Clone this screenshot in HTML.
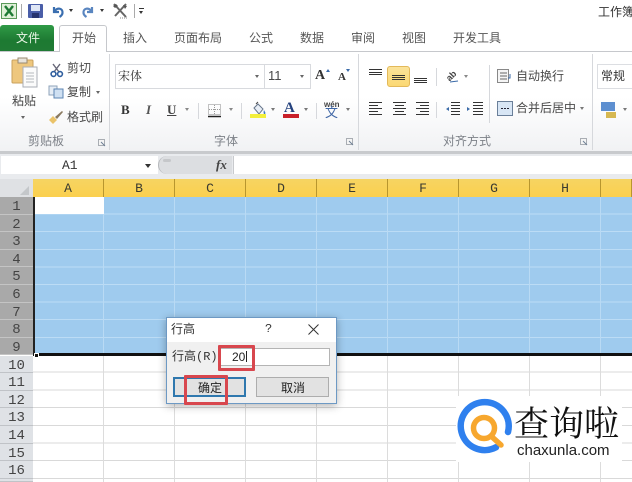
<!DOCTYPE html>
<html><head><meta charset="utf-8">
<style>
html,body{margin:0;padding:0}
body{width:632px;height:482px;overflow:hidden;position:relative;background:#fff;font-family:"Liberation Sans","Noto Sans CJK SC",sans-serif;color:#444}
#w{position:absolute;left:0;top:0;width:632px;height:482px;overflow:hidden;filter:blur(.35px)}
.a{position:absolute;white-space:nowrap}
.t{position:absolute;white-space:nowrap;font-size:12px;line-height:14px;color:#4a4a4a}
.tab{position:absolute;top:31px;font-size:12px;line-height:14px;color:#555;white-space:nowrap}
.gl{position:absolute;top:136px;font-size:11px;line-height:13px;color:#7d8188;white-space:nowrap}
.ar{position:absolute;width:0;height:0;border-left:2.5px solid transparent;border-right:2.5px solid transparent;border-top:3px solid #666}
.sep{position:absolute;width:1px;background:#d6d8dc}
.ch{position:absolute;top:179px;height:18px;font:13px/19px "Liberation Mono",monospace;color:#3a3a30;text-align:center;border-right:1px solid #b8962e;box-sizing:border-box;background:linear-gradient(#f6d462,#fbd04e)}
.rh{position:absolute;left:0;width:33px;text-align:center;font:14px/20px "Liberation Mono",monospace;color:#444;box-sizing:border-box}
.rh.s{background:#a9a9a9;height:17.6px;border-bottom:1px solid #c4c4c4}
.rh.n{background:#dfe2e6;height:17.6px;border-bottom:1px solid #c0c3c7}
svg{position:absolute;overflow:visible}
</style></head><body><div id="w">

<!-- top bar -->
<div class="a" style="left:0;top:0;width:632px;height:24px;background:#fff"></div>
<svg style="left:1px;top:3px" width="16" height="16"><rect x=".5" y=".5" width="15" height="15" fill="#dff0d8" stroke="#5a9a5a"/><path d="M4 3l8 10M12 3L4 13" stroke="#1e7a34" stroke-width="2.4"/></svg>
<div class="sep" style="left:21px;top:4px;height:14px;background:#aaa"></div>
<svg style="left:28px;top:4px" width="16" height="15"><rect x="0" y="0" width="15" height="14" rx="1" fill="#4a5ea8"/><rect x="3" y="1" width="9" height="6" fill="#dfe6f5"/><rect x="4" y="9" width="7" height="5" fill="#27346e"/></svg>
<svg style="left:51px;top:4px" width="13" height="14"><path d="M3 3v5h5M3.5 7.5C6 3 12 4 11.5 9c-.2 2-1.5 3-3 4" fill="none" stroke="#3b6fb0" stroke-width="2.2"/></svg>
<div class="ar" style="left:69px;top:9px;border-top-color:#333"></div>
<svg style="left:82px;top:4px" width="13" height="14"><path d="M10 3v5H5M9.5 7.5C7 3 1 4 1.5 9c.2 2 1.5 3 3 4" fill="none" stroke="#5a86c0" stroke-width="2.2"/></svg>
<div class="ar" style="left:100px;top:9px;border-top-color:#333"></div>
<svg style="left:112px;top:3px" width="17" height="16"><path d="M2 1l12 13M14 1L3 13" stroke="#666" stroke-width="2"/><path d="M1 3l3-2 2 2-3 2zM11 2l4 1-2 3z" fill="#555"/><path d="M8 15h8" stroke="#888" stroke-dasharray="1 1"/></svg>
<div class="sep" style="left:134px;top:4px;height:14px;background:#aaa"></div>
<div class="a" style="left:139px;top:8px;width:5px;height:1px;background:#333"></div>
<div class="ar" style="left:139px;top:11px;border-top-color:#333"></div>
<div class="t" style="left:598px;top:5px;color:#333">工作簿</div>

<!-- tabs -->
<div class="a" style="left:0;top:25px;width:54px;height:26px;background:linear-gradient(#2f9a46,#1d7a32 60%,#207a34);border-radius:3px 3px 0 0"></div>
<div class="t" style="left:16px;top:31px;color:#eaf5e6">文件</div>
<div class="a" style="left:0;top:51px;width:632px;height:1px;background:#c6c8cc"></div>
<div class="a" style="left:59px;top:25px;width:48px;height:27px;background:#fff;border:1px solid #c6c8cc;border-bottom:none;border-radius:3px 3px 0 0;box-sizing:border-box"></div>
<div class="tab" style="left:72px">开始</div>
<div class="tab" style="left:123px">插入</div>
<div class="tab" style="left:174px">页面布局</div>
<div class="tab" style="left:249px">公式</div>
<div class="tab" style="left:300px">数据</div>
<div class="tab" style="left:351px">审阅</div>
<div class="tab" style="left:402px">视图</div>
<div class="tab" style="left:453px">开发工具</div>

<!-- ribbon -->
<div class="a" style="left:0;top:52px;width:632px;height:99px;background:linear-gradient(#fff 0,#fff 45%,#f1f2f4 100%)"></div>
<div class="a" style="left:0;top:151px;width:632px;height:3px;background:#c8cacd"></div>
<div class="sep" style="left:109px;top:54px;height:96px"></div>
<div class="sep" style="left:358px;top:54px;height:96px"></div>
<div class="sep" style="left:592px;top:54px;height:96px"></div>

<!-- clipboard -->
<svg style="left:11px;top:57px" width="28" height="32"><rect x="1" y="3" width="21" height="23" rx="1" fill="#eec77e" stroke="#c9a15c"/><rect x="7" y="1" width="9" height="5" fill="#e8e4dc" stroke="#9a8a70"/><path d="M12 10h14v20H12z" fill="#fbfbfb" stroke="#a9aeb5"/><path d="M15 16h8M15 19h8M15 22h8M15 25h8" stroke="#b4b8be"/></svg>
<div class="t" style="left:12px;top:94px;color:#444">粘贴</div>
<div class="ar" style="left:21px;top:116px"></div>
<svg style="left:50px;top:63px" width="14" height="14"><path d="M3 1l6 8M10 1L4 9" stroke="#667" stroke-width="1.4"/><circle cx="3.5" cy="11" r="2.4" fill="none" stroke="#2f5e9e" stroke-width="1.6"/><circle cx="10" cy="11" r="2.4" fill="none" stroke="#2f5e9e" stroke-width="1.6"/></svg>
<div class="t" style="left:67px;top:61px">剪切</div>
<svg style="left:48px;top:85px" width="16" height="14"><rect x="1" y="1" width="8" height="9" fill="#e6edf5" stroke="#8fa3ba"/><rect x="6" y="4" width="9" height="9" fill="#cfe0f2" stroke="#5c85b3"/></svg>
<div class="t" style="left:67px;top:85px">复制</div>
<div class="ar" style="left:96px;top:91px"></div>
<svg style="left:48px;top:110px" width="16" height="15"><path d="M1 10l4-4 4 4-4 4z" fill="#eac36a"/><path d="M7 7l7-6 1 1-6 7z" fill="#8a7a60"/></svg>
<div class="t" style="left:67px;top:110px">格式刷</div>
<div class="gl" style="left:28px;top:135px;font-size:12px">剪贴板</div>
<svg style="left:98px;top:139px" width="8" height="8"><rect x=".5" y=".5" width="6" height="6" fill="#f4f4f4" stroke="#a9adb3"/><path d="M3 3l4 4" stroke="#6e7f95"/></svg>

<!-- font -->
<div class="a" style="left:115px;top:64px;width:196px;height:25px;border:1px solid #d8dade;background:#fff;box-sizing:border-box"></div>
<div class="sep" style="left:264px;top:64px;height:25px;background:#d8dade"></div>
<div class="t" style="left:118px;top:69px;color:#333;font-family:'Liberation Serif','Noto Serif CJK SC',serif">宋体</div>
<div class="ar" style="left:255px;top:75px"></div>
<div class="t" style="left:268px;top:69px;font-size:13px">11</div>
<div class="ar" style="left:300px;top:75px"></div>
<div class="a" style="left:315px;top:68px;font:bold 14px/16px 'Liberation Serif',serif;color:#333">A</div>
<div class="ar" style="left:326px;top:69px;border-top:none;border-bottom:3px solid #3a6aa8"></div>
<div class="a" style="left:338px;top:70px;font:bold 11px/14px 'Liberation Serif',serif;color:#333">A</div>
<div class="ar" style="left:346px;top:69px;border-top-color:#3a6aa8"></div>
<div class="a" style="left:121px;top:102px;font:bold 13px/16px 'Liberation Serif',serif;color:#333">B</div>
<div class="a" style="left:146px;top:102px;font:italic bold 13px/16px 'Liberation Serif',serif;color:#555">I</div>
<div class="a" style="left:167px;top:102px;font:bold 13px/16px 'Liberation Serif',serif;color:#444;text-decoration:underline">U</div>
<div class="ar" style="left:185px;top:108px;border-top-color:#888"></div>
<div class="sep" style="left:198px;top:103px;height:16px"></div>
<svg style="left:208px;top:104px" width="14" height="14"><rect x=".5" y=".5" width="12" height="10" fill="none" stroke="#888" stroke-dasharray="1 1"/><path d="M6.5 1v9M1 5.5h11" stroke="#999" stroke-dasharray="1 1"/><path d="M0 12.5h13" stroke="#222" stroke-width="1.5"/></svg>
<div class="ar" style="left:229px;top:108px;border-top-color:#888"></div>
<div class="sep" style="left:241px;top:103px;height:16px"></div>
<svg style="left:250px;top:102px" width="18" height="16"><path d="M4 6l4-4 5 5-4 5z" fill="#e8eef6" stroke="#66758a"/><path d="M6 2l2-2" stroke="#444"/><path d="M14 8c1 2 2 3 1 4s-2-1-1-4z" fill="#3f7cc0"/></svg>
<div class="a" style="left:250px;top:114px;width:16px;height:4px;background:#f3ef3c"></div>
<div class="ar" style="left:271px;top:108px;border-top-color:#777"></div>
<div class="a" style="left:284px;top:100px;font:bold 15px/16px 'Liberation Serif',serif;color:#25427e">A</div>
<div class="a" style="left:283px;top:114px;width:16px;height:4px;background:#c9202a"></div>
<div class="ar" style="left:304px;top:108px;border-top-color:#777"></div>
<div class="sep" style="left:316px;top:103px;height:16px"></div>
<div class="a" style="left:324px;top:101px;font:bold 8px/8px 'Liberation Sans',sans-serif;color:#444">wén</div>
<div class="a" style="left:325px;top:106px;font-size:13px;line-height:14px;color:#3f66a5">文</div>
<div class="ar" style="left:346px;top:108px;border-top-color:#777"></div>
<div class="gl" style="left:214px;top:135px;font-size:12px">字体</div>
<svg style="left:346px;top:138px" width="8" height="8"><rect x=".5" y=".5" width="6" height="6" fill="#f4f4f4" stroke="#a9adb3"/><path d="M3 3l4 4" stroke="#6e7f95"/></svg>

<!-- alignment -->
<div class="a" style="left:387px;top:66px;width:23px;height:21px;background:linear-gradient(#fbe39a,#fbd873);border:1px solid #e3b95a;border-radius:3px;box-sizing:border-box"></div>
<svg style="left:368px;top:69px" width="64" height="16" stroke="#333" stroke-width="1"><path d="M1 .5h13M1 3.5h13M1 5.5h13"/><path d="M24 6.5h13M24 8.5h13M24 10.5h13"/><path d="M46 9.5h13M46 11.5h13M46 13.5h13"/></svg>
<div class="sep" style="left:436px;top:68px;height:18px"></div>
<svg style="left:445px;top:68px" width="26" height="16"><text x="1" y="9" transform="rotate(-45 6 8) translate(0,2)" font-family="Liberation Sans" font-size="9" font-weight="bold" fill="#444">ab</text><path d="M5 14l8-1" stroke="#3a6aa8"/></svg>
<div class="ar" style="left:464px;top:75px;border-top-color:#888"></div>
<svg style="left:368px;top:102px" width="62" height="14" stroke="#333"><path d="M1 .5h13M1 3.5h9M1 6.5h13M1 9.5h9M1 12.5h13"/><path d="M25 .5h13M27 3.5h9M25 6.5h13M27 9.5h9M25 12.5h13"/><path d="M48 .5h13M52 3.5h9M48 6.5h13M52 9.5h9M48 12.5h13"/></svg>
<div class="sep" style="left:436px;top:102px;height:16px"></div>
<svg style="left:445px;top:102px" width="40" height="16" stroke="#333"><path d="M6 .5h9M6 3.5h9M6 6.5h9M6 9.5h9M6 12.5h9"/><path d="M4 5l-3 2 3 2z" fill="#3a6aa8" stroke="none"/><path d="M28 .5h10M28 3.5h10M28 6.5h10M28 9.5h10M28 12.5h10"/><path d="M22 5l3 2-3 2z" fill="#3a6aa8" stroke="none"/></svg>
<div class="sep" style="left:489px;top:65px;height:58px"></div>
<svg style="left:497px;top:69px" width="16" height="15"><rect x=".5" y=".5" width="11" height="13" fill="#f5f5f5" stroke="#888"/><path d="M3 4h7M3 7h7M3 10h7" stroke="#666"/><path d="M13 5v4h-2" stroke="#3a6aa8" fill="none"/></svg>
<div class="t" style="left:516px;top:69px">自动换行</div>
<svg style="left:497px;top:101px" width="16" height="15"><rect x=".5" y=".5" width="15" height="14" fill="#d8e6f5" stroke="#6a7f99"/><path d="M4 7.5h8" stroke="#223" stroke-dasharray="2 1"/></svg>
<div class="t" style="left:516px;top:101px">合并后居中</div>
<div class="ar" style="left:580px;top:107px;border-top-color:#777"></div>
<div class="gl" style="left:443px;top:135px;font-size:12px">对齐方式</div>
<svg style="left:580px;top:138px" width="8" height="8"><rect x=".5" y=".5" width="6" height="6" fill="#f4f4f4" stroke="#a9adb3"/><path d="M3 3l4 4" stroke="#6e7f95"/></svg>

<!-- number -->
<div class="a" style="left:597px;top:64px;width:40px;height:25px;border:1px solid #dcdee2;box-sizing:border-box;background:#fff"></div>
<div class="t" style="left:601px;top:69px;color:#333">常规</div>
<svg style="left:601px;top:102px" width="16" height="16"><rect x="0" y="0" width="14" height="9" fill="#5d8fd0"/><path d="M5 11h10M5 13h10M5 15h10" stroke="#c9a21a" stroke-width="1.4"/></svg>
<div class="ar" style="left:623px;top:108px;border-top-color:#777"></div>

<!-- formula bar -->
<div class="a" style="left:0;top:154px;width:632px;height:25px;background:#e9ebee"></div>
<div class="a" style="left:1px;top:156px;width:157px;height:18px;background:#fff"></div>
<div class="a" style="left:62px;top:158px;font:13px/15px 'Liberation Mono',monospace;color:#333">A1</div>
<div class="ar" style="left:145px;top:164px;border-left-width:3.5px;border-right-width:3.5px;border-top:4px solid #333"></div>
<div class="a" style="left:158px;top:156px;width:74px;height:18px;background:#dcdee1;border-radius:9px 0 0 9px;border-left:1px solid #b5b7ba;box-sizing:border-box"></div>
<div class="a" style="left:163px;top:159px;width:8px;height:3px;background:#c5c7ca;border-radius:3px"></div>
<div class="a" style="left:216px;top:156px;font:italic bold 13px/17px 'Liberation Serif',serif;color:#444">fx</div>
<div class="a" style="left:233px;top:156px;width:399px;height:18px;background:#fff;border-left:1px solid #c8cacd;box-sizing:border-box"></div>

<!-- sheet -->
<div class="a" style="left:0;top:179px;width:33px;height:18px;background:#dfe1e4"></div>
<svg style="left:20px;top:186px" width="10" height="10"><path d="M9 0v9H0z" fill="#c4c7ca"/></svg>
<div class="ch" style="left:33px;width:71px">A</div>
<div class="ch" style="left:104px;width:71px">B</div>
<div class="ch" style="left:175px;width:71px">C</div>
<div class="ch" style="left:246px;width:71px">D</div>
<div class="ch" style="left:317px;width:71px">E</div>
<div class="ch" style="left:388px;width:71px">F</div>
<div class="ch" style="left:459px;width:71px">G</div>
<div class="ch" style="left:530px;width:71px">H</div>
<div class="ch" style="left:601px;width:31px"></div>

<div class="a" style="left:33px;top:197px;width:599px;height:158px;background-color:#9fcbee;background-image:repeating-linear-gradient(to right,transparent 0,transparent 70px,#b9daf4 70px,#b9daf4 71px),repeating-linear-gradient(to bottom,transparent 0,transparent 16.6px,#bcdcf5 16.6px,#bcdcf5 17.6px);background-position:0 0"></div>
<div class="a" style="left:35px;top:197px;width:69px;height:17px;background:#fff"></div>
<div class="a" style="left:33px;top:197px;width:2px;height:158px;background:#222"></div>
<div class="a" style="left:33px;top:355px;width:599px;height:127px;background-color:#fff;background-image:repeating-linear-gradient(to right,transparent 0,transparent 70px,#dcdcdc 70px,#dcdcdc 71px),repeating-linear-gradient(to bottom,transparent 0,transparent 16.7px,#d9d9d9 16.7px,#d9d9d9 17.7px)"></div>
<div class="a" style="left:33px;top:353px;width:599px;height:3px;background:#111"></div>
<div class="a" style="left:34px;top:353px;width:5px;height:5px;background:#111;border:1px solid #fff;box-sizing:border-box"></div>

<div class="rh s" style="top:197px">1</div>
<div class="rh s" style="top:214.6px">2</div>
<div class="rh s" style="top:232.2px">3</div>
<div class="rh s" style="top:249.8px">4</div>
<div class="rh s" style="top:267.4px">5</div>
<div class="rh s" style="top:285px">6</div>
<div class="rh s" style="top:302.6px">7</div>
<div class="rh s" style="top:320.2px">8</div>
<div class="rh s" style="top:337.8px">9</div>
<div class="rh n" style="top:355.5px">10</div>
<div class="rh n" style="top:373.1px">11</div>
<div class="rh n" style="top:390.8px">12</div>
<div class="rh n" style="top:408.4px">13</div>
<div class="rh n" style="top:426px">14</div>
<div class="rh n" style="top:443.7px">15</div>
<div class="rh n" style="top:461.3px">16</div>
<div class="rh n" style="top:479px;height:3px"></div>

<!-- dialog -->
<div class="a" style="left:166px;top:317px;width:171px;height:87px;background:#f0f0f0;border:1px solid #6d99c4;box-sizing:border-box;box-shadow:0 2px 8px rgba(0,0,0,.3)"></div>
<div class="a" style="left:167px;top:318px;width:169px;height:24px;background:#fff"></div>
<div class="t" style="left:171px;top:322px;color:#333">行高</div>
<div class="a" style="left:265px;top:322px;font:12px/15px 'Liberation Mono',monospace;color:#333">?</div>
<svg style="left:308px;top:324px" width="11" height="11"><path d="M.5.5l10 10M10.5.5l-10 10" stroke="#333"/></svg>
<div class="t" style="left:172px;top:350px;font-size:12px;color:#333;font-family:'Liberation Mono','Noto Sans CJK SC',monospace">行高(R):</div>
<div class="a" style="left:220px;top:348px;width:110px;height:18px;background:#fff;border:1px solid #b4b4b4;box-sizing:border-box"></div>
<div class="a" style="left:232px;top:350px;font:12px/15px 'Liberation Sans',sans-serif;color:#222">20</div>
<div class="a" style="left:246px;top:351px;width:1px;height:11px;background:#222"></div>
<div class="a" style="left:173px;top:377px;width:73px;height:20px;background:#e2e2e2;border:2px solid #2f78ae;box-sizing:border-box"></div>
<div class="t" style="left:198px;top:381px;color:#222">确定</div>
<div class="a" style="left:256px;top:377px;width:73px;height:20px;background:#e2e2e2;border:1px solid #adadad;box-sizing:border-box"></div>
<div class="t" style="left:281px;top:381px;color:#222">取消</div>
<div class="a" style="left:218px;top:345px;width:37px;height:26px;border:3px solid #d8474e;box-sizing:border-box;border-radius:1px"></div>
<div class="a" style="left:184px;top:375px;width:44px;height:30px;border:3px solid #d8474e;box-sizing:border-box;border-radius:1px"></div>

<!-- logo -->
<div class="a" style="left:456px;top:396px;width:166px;height:66px;background:#fff"></div>
<svg style="left:458px;top:398px" width="56" height="56" viewBox="0 0 56 56">
<path d="M50 34A24 24 0 1 0 38 49.3" fill="none" stroke="#2f80ee" stroke-width="6.5" stroke-linecap="round"/>
<circle cx="26" cy="30" r="10.5" fill="none" stroke="#f7a72e" stroke-width="5.5"/>
<path d="M33 38l10 9" stroke="#f7a72e" stroke-width="5.5" stroke-linecap="round"/>
</svg>
<div class="a" style="left:514px;top:400px;font:35px/44px 'Noto Serif CJK SC','Noto Sans CJK SC',serif;color:#111">查询啦</div>
<div class="a" style="left:517px;top:441px;font:15px/20px 'Liberation Sans',sans-serif;color:#222">chaxunla.com</div>

</div></body></html>
